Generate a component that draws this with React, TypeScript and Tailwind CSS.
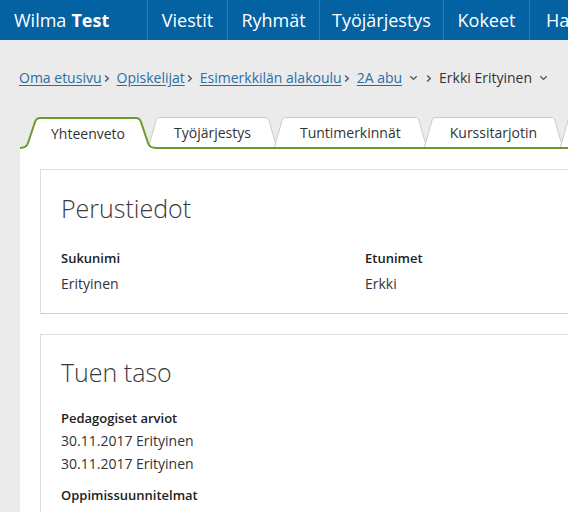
import React from "react";

const GREEN = "#6c9a2e";
const GRAY = "#c9c9c9";

function Chevron({ className = "" }: { className?: string }) {
  return (
    <svg width="6" height="9" viewBox="0 0 6 9" className={className}>
      <path d="M1.2 1.5 L4.3 4.5 L1.2 7.5" fill="none" stroke="#555" strokeWidth="1.4" />
    </svg>
  );
}

function Down({ className = "" }: { className?: string }) {
  return (
    <svg width="9" height="6" viewBox="0 0 9 6" className={className}>
      <path d="M1.3 1.3 L4.5 4.4 L7.7 1.3" fill="none" stroke="#555" strokeWidth="1.4" />
    </svg>
  );
}

function ActiveTab({ label }: { label: string }) {
  return (
    <div className="relative z-10 flex h-[32px] -mb-[2px] shrink-0">
      <svg width="20" height="32" viewBox="0 0 20 32" className="block shrink-0">
        <path d="M0,32 L0,31 C5,31 7,29 8,26 L15,5 C16,2 17.5,1 20,1 L20,32 Z" fill="#fff" />
        <path d="M0,31 C5,31 7,29 8,26 L15,5 C16,2 17.5,1 20,1" fill="none" stroke={GREEN} strokeWidth="2" />
      </svg>
      <div className="flex h-[32px] items-start border-t-2 border-[#6c9a2e] bg-white px-[11px] pt-[4px] text-[14px] leading-[22px] text-[#333]">
        {label}
      </div>
      <svg width="20" height="32" viewBox="0 0 20 32" className="block shrink-0">
        <path d="M20,32 L20,31 C15,31 13,29 12,26 L5,5 C4,2 2.5,1 0,1 L0,32 Z" fill="#fff" />
        <path d="M20,31 C15,31 13,29 12,26 L5,5 C4,2 2.5,1 0,1" fill="none" stroke={GREEN} strokeWidth="2" />
      </svg>
    </div>
  );
}

function Tab({ label, first }: { label: string; first?: boolean }) {
  return (
    <div className={`relative flex h-[30px] shrink-0 ${first ? "-ml-[8px]" : "-ml-[3px]"}`}>
      <svg width="12" height="30" viewBox="0 0 12 30" className="block shrink-0">
        <path d="M0,30 L8,3.5 C8.8,1.3 10,0.5 12,0.5 L12,30 Z" fill="#fff" />
        <path d="M0.5,30 L8,3.5 C8.8,1.3 10,0.5 12,0.5" fill="none" stroke={GRAY} strokeWidth="1" />
      </svg>
      <div className="flex h-[30px] items-center border-t border-[#c9c9c9] bg-white px-[14px] text-[14px] leading-[22px] text-[#333]">
        {label}
      </div>
      <svg width="12" height="30" viewBox="0 0 12 30" className="block shrink-0">
        <path d="M12,30 L4,3.5 C3.2,1.3 2,0.5 0,0.5 L0,30 Z" fill="#fff" />
        <path d="M11.5,30 L4,3.5 C3.2,1.3 2,0.5 0,0.5" fill="none" stroke={GRAY} strokeWidth="1" />
      </svg>
    </div>
  );
}

const navItems: { label: string; cls: string }[] = [
  { label: "Viestit", cls: "w-[80px] justify-center" },
  { label: "Ryhmät", cls: "w-[92px] justify-center" },
  { label: "Työjärjestys", cls: "w-[124px] justify-center" },
  { label: "Kokeet", cls: "w-[86px] justify-center" },
  { label: "Hakemukset", cls: "pl-[16px] pr-[16px]" },
];

export default function App() {
  const font = { fontFamily: '"Open Sans", "Liberation Sans", sans-serif' };
  return (
    <div className="h-[512px] w-[568px] overflow-hidden bg-[#ebebeb]" style={font}>
      <div className="w-[900px]">
        {/* Header */}
        <div className="flex h-[40px] bg-[#0461a2] text-white">
          <div className="flex w-[147px] shrink-0 items-center pl-[14px] text-[18px]">
            <span>Wilma</span>
            <span className="ml-[5px] font-bold">Test</span>
          </div>
          {navItems.map((n) => (
            <div
              key={n.label}
              className={`flex shrink-0 items-center border-l border-[#2d7ab5] text-[18px] ${n.cls}`}
            >
              {n.label}
            </div>
          ))}
        </div>

        {/* Breadcrumb */}
        <div className="mt-[28px] flex h-[20px] items-center pl-[19px] text-[14px] leading-[20px]">
          <a className="text-[#2a6ea6] underline underline-offset-2">Oma etusivu</a>
          <Chevron className="ml-[2px] mr-[7px]" />
          <a className="text-[#2a6ea6] underline underline-offset-2">Opiskelijat</a>
          <Chevron className="ml-[2px] mr-[7px]" />
          <a className="text-[#2a6ea6] underline underline-offset-2">Esimerkkilän alakoulu</a>
          <Chevron className="ml-[2px] mr-[7px]" />
          <a className="text-[#2a6ea6] underline underline-offset-2">2A abu</a>
          <Down className="ml-[7px]" />
          <Chevron className="ml-[8px] mr-[7px]" />
          <span className="text-[#333]">Erkki Erityinen</span>
          <Down className="ml-[7px]" />
        </div>

        {/* Tabs */}
        <div className="ml-[20px] mt-[29px]">
          <div className="flex h-[30px] items-end">
            <ActiveTab label="Yhteenveto" />
            <Tab label="Työjärjestys" first />
            <Tab label="Tuntimerkinnät" />
            <Tab label="Kurssitarjotin" />
            <Tab label="Opinnot" />
          </div>
          <div className="border-t-2 border-[#6c9a2e] bg-white px-[20px] pt-[20px] pb-[40px]">
            {/* Card 1 */}
            <div className="border border-[#dedede] border-b-[#cfcfcf] bg-white pl-[20px] pt-[20px] pb-[18px]">
              <h2 className="text-[25px] font-light leading-[36px] text-[#3a3a3a]">Perustiedot</h2>
              <div className="mt-[22px] grid grid-cols-[304px_1fr]">
                <div>
                  <div className="text-[13px] font-semibold leading-[20px] text-[#222]">Sukunimi</div>
                  <div className="mt-[5px] text-[14px] leading-[22px] text-[#333]">Erityinen</div>
                </div>
                <div>
                  <div className="text-[13px] font-semibold leading-[20px] text-[#222]">Etunimet</div>
                  <div className="mt-[5px] text-[14px] leading-[22px] text-[#333]">Erkki</div>
                </div>
              </div>
            </div>

            {/* Card 2 */}
            <div className="mt-[20px] border border-[#dedede] border-b-[#cfcfcf] bg-white pl-[20px] pt-[19px] pb-[18px]">
              <h2 className="text-[25px] font-light leading-[36px] text-[#3a3a3a]">Tuen taso</h2>
              <div className="mt-[18px] text-[13px] font-semibold leading-[20px] text-[#222]">Pedagogiset arviot</div>
              <div className="mt-[1px] text-[14px] leading-[23px] text-[#333]">30.11.2017 Erityinen</div>
              <div className="text-[14px] leading-[23px] text-[#333]">30.11.2017 Erityinen</div>
              <div className="mt-[10px] text-[13px] font-semibold leading-[20px] text-[#222]">Oppimissuunnitelmat</div>
              <div className="mt-[1px] text-[14px] leading-[23px] text-[#333]">30.11.2017 HOJKS</div>
            </div>
          </div>
        </div>
      </div>
    </div>
  );
}
